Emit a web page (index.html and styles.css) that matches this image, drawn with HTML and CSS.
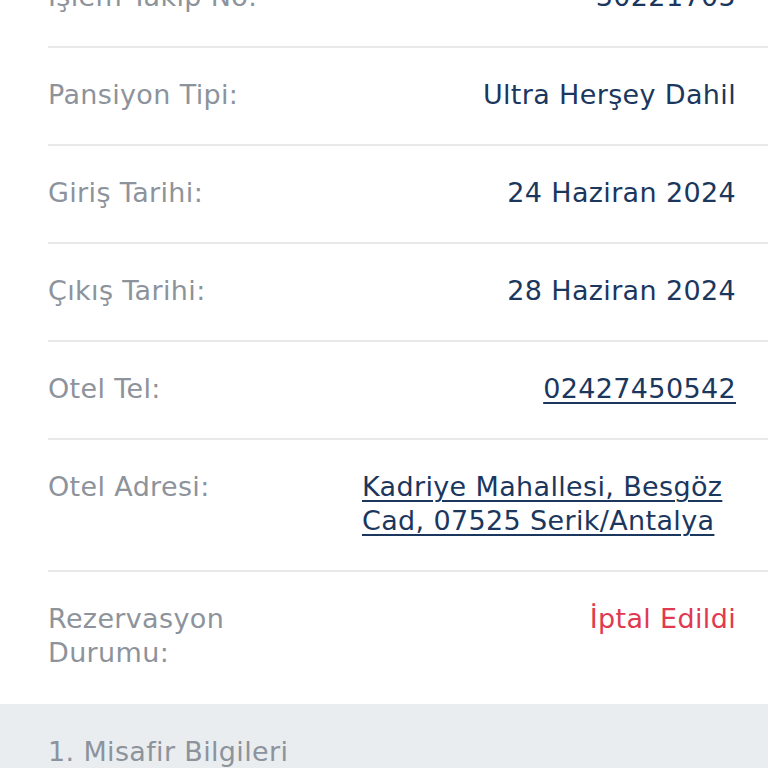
FILE: index.html
```html
<!DOCTYPE html>
<html lang="tr">
<head>
<meta charset="utf-8">
<link rel="stylesheet" href="styles.css">
</head>
<body>
<div class="details">
  <div class="row">
    <div class="label">İşlem Takip No:</div>
    <div class="value">30221705</div>
  </div>
  <div class="row">
    <div class="label">Pansiyon Tipi:</div>
    <div class="value">Ultra Herşey Dahil</div>
  </div>
  <div class="row">
    <div class="label">Giriş Tarihi:</div>
    <div class="value">24 Haziran 2024</div>
  </div>
  <div class="row">
    <div class="label">Çıkış Tarihi:</div>
    <div class="value">28 Haziran 2024</div>
  </div>
  <div class="row">
    <div class="label">Otel Tel:</div>
    <div class="value"><a class="link" href="#">02427450542</a></div>
  </div>
  <div class="row">
    <div class="label">Otel Adresi:</div>
    <div class="value value-left"><a class="link" href="#">Kadriye Mahallesi, Besgöz Cad, 07525 Serik/Antalya</a></div>
  </div>
  <div class="row row-last">
    <div class="label">Rezervasyon Durumu:</div>
    <div class="value status-cancel">İptal Edildi</div>
  </div>
</div>
<div class="section-head">1. Misafir Bilgileri</div>
</body>
</html>
```
FILE: styles.css
```css
html, body {
  margin: 0;
  padding: 0;
  background: #ffffff;
}
body {
  font-family: "DejaVu Sans", sans-serif;
  font-size: 27px;
  line-height: 34px;
  letter-spacing: 0.35px;
  overflow: hidden;
}
.details {
  margin-top: -50px;
}
.row {
  display: grid;
  grid-template-columns: 314px 1fr;
  margin-left: 48px;
  padding: 30px 32px 32px 0;
  border-bottom: 2px solid #e8e9eb;
}
.row-last {
  border-bottom: none;
  padding-bottom: 34px;
}
.label {
  color: #8d939b;
  padding-right: 20px;
}
.value {
  color: #1b375e;
  text-align: right;
}
.value-left {
  text-align: left;
}
.link {
  color: #1b375e;
  text-decoration: underline;
  text-decoration-thickness: 1.5px;
  text-underline-offset: 4px;
}
.status-cancel {
  color: #e03a50;
}
.section-head {
  background: #e9edf0;
  color: #8d939b;
  padding: 31px 48px;
}
```
